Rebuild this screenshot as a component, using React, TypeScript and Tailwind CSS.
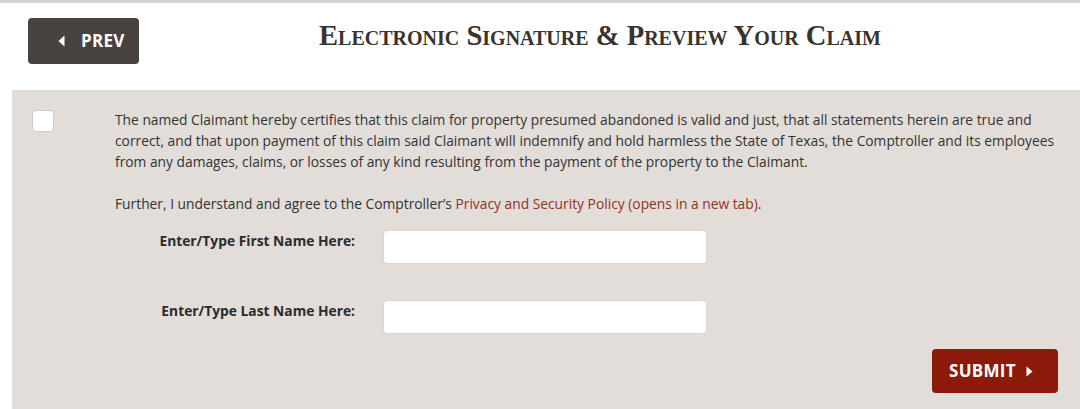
import React from "react";

function CaretLeft() {
  return (
    <svg width="7" height="12" viewBox="0 0 7 12" className="fill-white">
      <path d="M6.5 0.5 L0.5 6 L6.5 11.5 Z" />
    </svg>
  );
}

function CaretRight() {
  return (
    <svg width="7" height="11" viewBox="0 0 7 11" className="fill-white">
      <path d="M0.5 0.5 L6.5 5.5 L0.5 10.5 Z" />
    </svg>
  );
}

function NameRow({ label }: { label: string }) {
  return (
    <div className="ml-[103px] flex items-start">
      <label className="w-[240px] pt-[1px] text-right text-[13.8px] font-bold leading-[20px] text-[#2b2b2b]">{label}</label>
      <input
        type="text"
        className="ml-[28px] h-[34px] w-[324px] rounded-[4px] border border-[#d5d5dc] bg-white px-2 text-sm outline-none"
      />
    </div>
  );
}

export default function App() {
  return (
    <div className="min-h-[409px] w-[1080px] overflow-hidden bg-white font-['Open_Sans',sans-serif]">
      <div className="h-[3px] bg-[#d9d1cb]" />
      <div className="flex items-start pl-[28px] pr-[19px] pt-[15px]">
        <button
          type="button"
          className="flex h-[46px] w-[111px] items-center gap-[16px] rounded-[4px] bg-[#48433f] pl-[30px] text-[17px] font-bold tracking-[0.3px] text-white"
        >
          <CaretLeft />
          PREV
        </button>
        <h1 className="flex-1 text-center font-['Liberation_Serif',serif] text-[28.6px] font-bold leading-[36px] text-[#39332f] [font-variant:small-caps]">
          Electronic Signature &amp; Preview Your Claim
        </h1>
      </div>

      <div className="ml-[12px] mt-[26px] flex h-[320px] flex-col bg-[#e2ddd9] pt-[19px]">
        <div className="flex items-start">
          <div className="ml-[20px] mt-[1px] h-[22px] w-[22px] rounded-[4px] border border-[#c9ccd6] bg-white" />
          <div className="ml-[61px] w-[946px] text-[13.8px] leading-[21px] text-[#333]">
            <p>
              The named Claimant hereby certifies that this claim for property presumed abandoned is valid and just, that all
              statements herein are true and correct, and that upon payment of this claim said Claimant will indemnify and
              hold harmless the State of Texas, the Comptroller and its employees from any damages, claims, or losses of any
              kind resulting from the payment of the property to the Claimant.
            </p>
            <p className="mt-[21px]">
              Further, I understand and agree to the Comptroller’s{" "}
              <a href="#" className="text-[#96301e]">
                Privacy and Security Policy (opens in a new tab)
              </a>
              .
            </p>
          </div>
        </div>

        <div className="mt-[16px] flex flex-col gap-[36px]">
          <NameRow label="Enter/Type First Name Here:" />
          <NameRow label="Enter/Type Last Name Here:" />
        </div>

        <div className="mt-[15px] flex justify-end pr-[22px]">
          <button
            type="button"
            className="flex h-[44px] w-[126px] items-center gap-[10px] rounded-[4px] bg-[#8b1a0a] pl-[17px] text-[17px] font-bold tracking-[0.3px] text-white"
          >
            SUBMIT
            <CaretRight />
          </button>
        </div>
      </div>
    </div>
  );
}
